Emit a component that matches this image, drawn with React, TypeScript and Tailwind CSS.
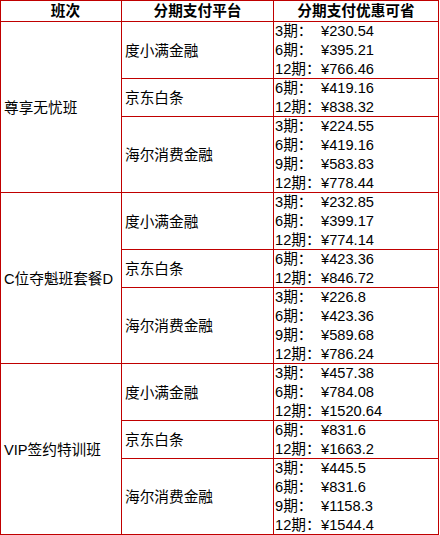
import React from "react";

type Sub = { platform: string; items: [string, string][] };
type Group = { name: string; subs: Sub[] };

const data: Group[] = [
  {
    name: "尊享无忧班",
    subs: [
      { platform: "度小满金融", items: [["3期：", "¥230.54"], ["6期：", "¥395.21"], ["12期：", "¥766.46"]] },
      { platform: "京东白条", items: [["6期：", "¥419.16"], ["12期：", "¥838.32"]] },
      { platform: "海尔消费金融", items: [["3期：", "¥224.55"], ["6期：", "¥419.16"], ["9期：", "¥583.83"], ["12期：", "¥778.44"]] },
    ],
  },
  {
    name: "C位夺魁班套餐D",
    subs: [
      { platform: "度小满金融", items: [["3期：", "¥232.85"], ["6期：", "¥399.17"], ["12期：", "¥774.14"]] },
      { platform: "京东白条", items: [["6期：", "¥423.36"], ["12期：", "¥846.72"]] },
      { platform: "海尔消费金融", items: [["3期：", "¥226.8"], ["6期：", "¥423.36"], ["9期：", "¥589.68"], ["12期：", "¥786.24"]] },
    ],
  },
  {
    name: "VIP签约特训班",
    subs: [
      { platform: "度小满金融", items: [["3期：", "¥457.38"], ["6期：", "¥784.08"], ["12期：", "¥1520.64"]] },
      { platform: "京东白条", items: [["6期：", "¥831.6"], ["12期：", "¥1663.2"]] },
      { platform: "海尔消费金融", items: [["3期：", "¥445.5"], ["6期：", "¥831.6"], ["9期：", "¥1158.3"], ["12期：", "¥1544.4"]] },
    ],
  },
];

export default function App() {
  return (
    <div
      className="bg-white text-black text-[14.67px]"
      style={{ fontFamily: '"Liberation Sans", "Noto Sans CJK SC", sans-serif' }}
    >
      <div className="w-[439px] border-t border-l border-[#c00000]">
        <div className="flex h-[21px] font-bold">
          <div className="w-[121px] h-full border-r border-b border-[#c00000] flex items-center justify-center pl-[9px] leading-[19px]">
            班次
          </div>
          <div className="w-[152px] h-full border-r border-b border-[#c00000] flex items-center justify-center leading-[19px]">
            分期支付平台
          </div>
          <div className="w-[165px] h-full border-r border-b border-[#c00000] flex items-center justify-center leading-[19px]">
            分期支付优惠可省
          </div>
        </div>
        {data.map((g) => (
          <div key={g.name} className="flex h-[171px]">
            <div className="w-[121px] h-full border-r border-b border-[#c00000] flex items-center pl-[3px] pt-[2px] leading-[19px]">
              {g.name}
            </div>
            <div className="flex flex-col">
              {g.subs.map((s) => (
                <div
                  key={s.platform}
                  className="flex"
                  style={{ height: s.items.length * 19 }}
                >
                  <div className="w-[152px] h-full border-r border-b border-[#c00000] flex items-center pl-[3px] pt-[2px] leading-[19px]">
                    {s.platform}
                  </div>
                  <div className="w-[165px] h-full border-r border-b border-[#c00000] flex flex-col pl-[1px]">
                    {s.items.map(([k, v]) => (
                      <div key={k} className="h-[19px] leading-[19px] shrink-0 whitespace-nowrap">
                        <span className="inline-block w-[46px]">{k}</span>
                        <span>{v}</span>
                      </div>
                    ))}
                  </div>
                </div>
              ))}
            </div>
          </div>
        ))}
      </div>
    </div>
  );
}
